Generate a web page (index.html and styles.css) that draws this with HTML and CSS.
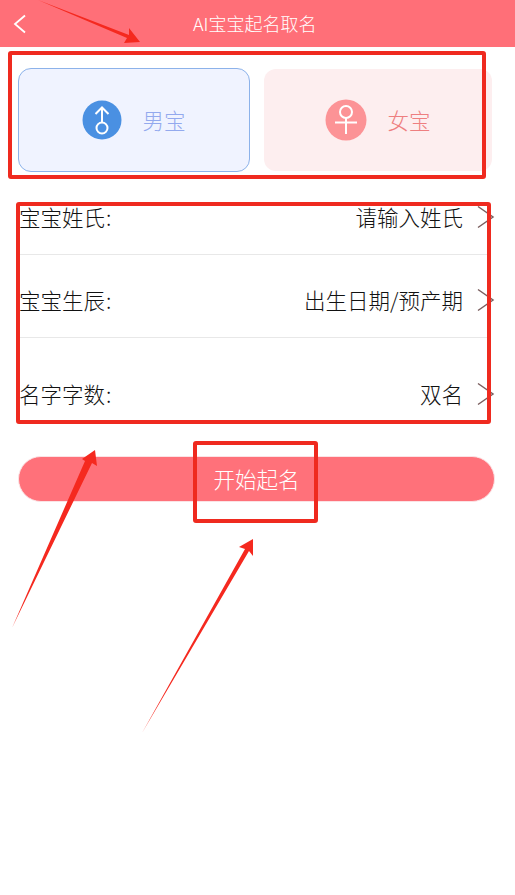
FILE: index.html
```html
<!DOCTYPE html>
<html lang="zh-CN">
<head>
<meta charset="utf-8">
<title>AI宝宝起名取名</title>
<link rel="stylesheet" href="styles.css">
</head>
<body>
<main class="page">
  <header class="topbar">
    <svg class="back" width="14" height="20" viewBox="0 0 14 20"><path d="M13 1.500 L3 10 L13 18.500" fill="none" stroke="#fff" stroke-width="1.800"/></svg>
    <h1 class="title">AI宝宝起名取名</h1>
  </header>

  <section class="genders">
    <div class="gender male">
      <svg class="gender-icon" width="40" height="40" viewBox="0 0 40 40"><circle cx="20" cy="20" r="19.500" fill="#4a90e2"/><circle cx="20" cy="28" r="5.500" fill="none" stroke="#fff" stroke-width="2"/><path d="M20 22 V8 M13.500 14 L20 7.500 L26.500 14" fill="none" stroke="#fff" stroke-width="2"/></svg>
      <span class="gender-label">男宝</span>
    </div>
    <div class="gender female">
      <svg class="gender-icon" width="42" height="42" viewBox="0 0 42 42"><circle cx="21" cy="21" r="20.500" fill="#fc9396"/><circle cx="21" cy="13" r="6" fill="none" stroke="#fff" stroke-width="2"/><path d="M21 19 V35 M10 23.500 H32" fill="none" stroke="#fff" stroke-width="2"/></svg>
      <span class="gender-label">女宝</span>
    </div>
  </section>

  <section class="form">
    <div class="row row-name">
      <span class="label">宝宝姓氏<span class="colon">:</span></span>
      <span class="value">请输入姓氏</span>
      <svg class="chev" width="18" height="24" viewBox="0 0 18 24"><path d="M1 1.500 L16 12 L1 22.500" fill="none" stroke="#7b5f5f" stroke-width="1.500"/></svg>
    </div>
    <div class="row row-date">
      <span class="label">宝宝生辰<span class="colon">:</span></span>
      <span class="value">出生日期/预产期</span>
      <svg class="chev" width="18" height="24" viewBox="0 0 18 24"><path d="M1 1.500 L16 12 L1 22.500" fill="none" stroke="#7b5f5f" stroke-width="1.500"/></svg>
    </div>
    <div class="row row-count">
      <span class="label">名字字数<span class="colon">:</span></span>
      <span class="value">双名</span>
      <svg class="chev" width="18" height="24" viewBox="0 0 18 24"><path d="M1 1.500 L16 12 L1 22.500" fill="none" stroke="#7b5f5f" stroke-width="1.500"/></svg>
    </div>
  </section>

  <button class="start" type="button">开始起名</button>

  <div class="mark mark-gender"></div>
  <div class="mark mark-form"></div>
  <div class="mark mark-start"></div>
  <svg class="arrows" width="515" height="895" viewBox="0 0 515 895">
    <polygon points="38,0 129,35 129,28 140,42 124,43 127,38" fill="#f5291f"/>
    <polygon points="12,628 85,461 82,459 95,450 97,466 92,463" fill="#f5291f"/>
    <polygon points="142,733 245,549 239,547 253,539 253,556 249,551" fill="#f5291f"/>
  </svg>
</main>
</body>
</html>
```
FILE: styles.css
```css
* { box-sizing: border-box; }
html, body { margin: 0; padding: 0; background: #fff; }
body { font-family: "Noto Sans CJK SC", "Noto Sans", sans-serif; font-weight: 300; }
.page { position: relative; width: 515px; height: 895px; overflow: hidden; }

.topbar { display: flex; align-items: center; height: 47px; background: #ff6f78; padding-left: 12px; }
.back { flex: none; }
.title { margin: 0 0 0 167px; font-size: 18px; font-weight: 300; line-height: 47px; color: #fff; white-space: nowrap; }

.genders { display: flex; align-items: center; gap: 14px; padding: 21px 0 0 18px; }
.gender { display: flex; align-items: center; justify-content: center; gap: 20px; }
.male { width: 232px; height: 104px; background: #f0f3ff; border: 1px solid #8cb2ea; border-radius: 13px; }
.female { width: 228px; height: 102px; background: #fdeeef; border-radius: 12px; }
.gender-label { font-size: 21.500px; line-height: 26px; }
.male .gender-label { color: #93a9ee; }
.female .gender-label { color: #ee7f80; }

.form { margin: 33px 0 0; padding: 0 24px 0 19px; }
.row { display: flex; align-items: center; font-size: 21.500px; line-height: 24px; color: #111; }
.row-name { padding-bottom: 25px; border-bottom: 1px solid #e8e8e8; }
.row-date { padding: 33px 0 25px; border-bottom: 1px solid #e8e8e8; }
.row-count { padding-top: 44px; }
.label { flex: 1; white-space: nowrap; }
.colon { margin-left: 1px; }
.value { white-space: nowrap; }
.chev { flex: none; margin: 0 -4px 0 14px; }

.start { display: block; width: 477px; height: 46px; margin: 50px 0 0 18px; padding: 0; background: #ff717a; border: 1px solid #fbe3e5; border-radius: 23px; color: #fff; font: inherit; font-size: 21.500px; line-height: 44px; }

.mark { position: absolute; border: 4px solid #ef2a1f; border-radius: 3px; pointer-events: none; }
.mark-gender { left: 8px; top: 51px; width: 478px; height: 128px; }
.mark-form { left: 16px; top: 202px; width: 475px; height: 222px; }
.mark-start { left: 193px; top: 441px; width: 125px; height: 82px; }
.arrows { position: absolute; left: 0; top: 0; pointer-events: none; }
```
